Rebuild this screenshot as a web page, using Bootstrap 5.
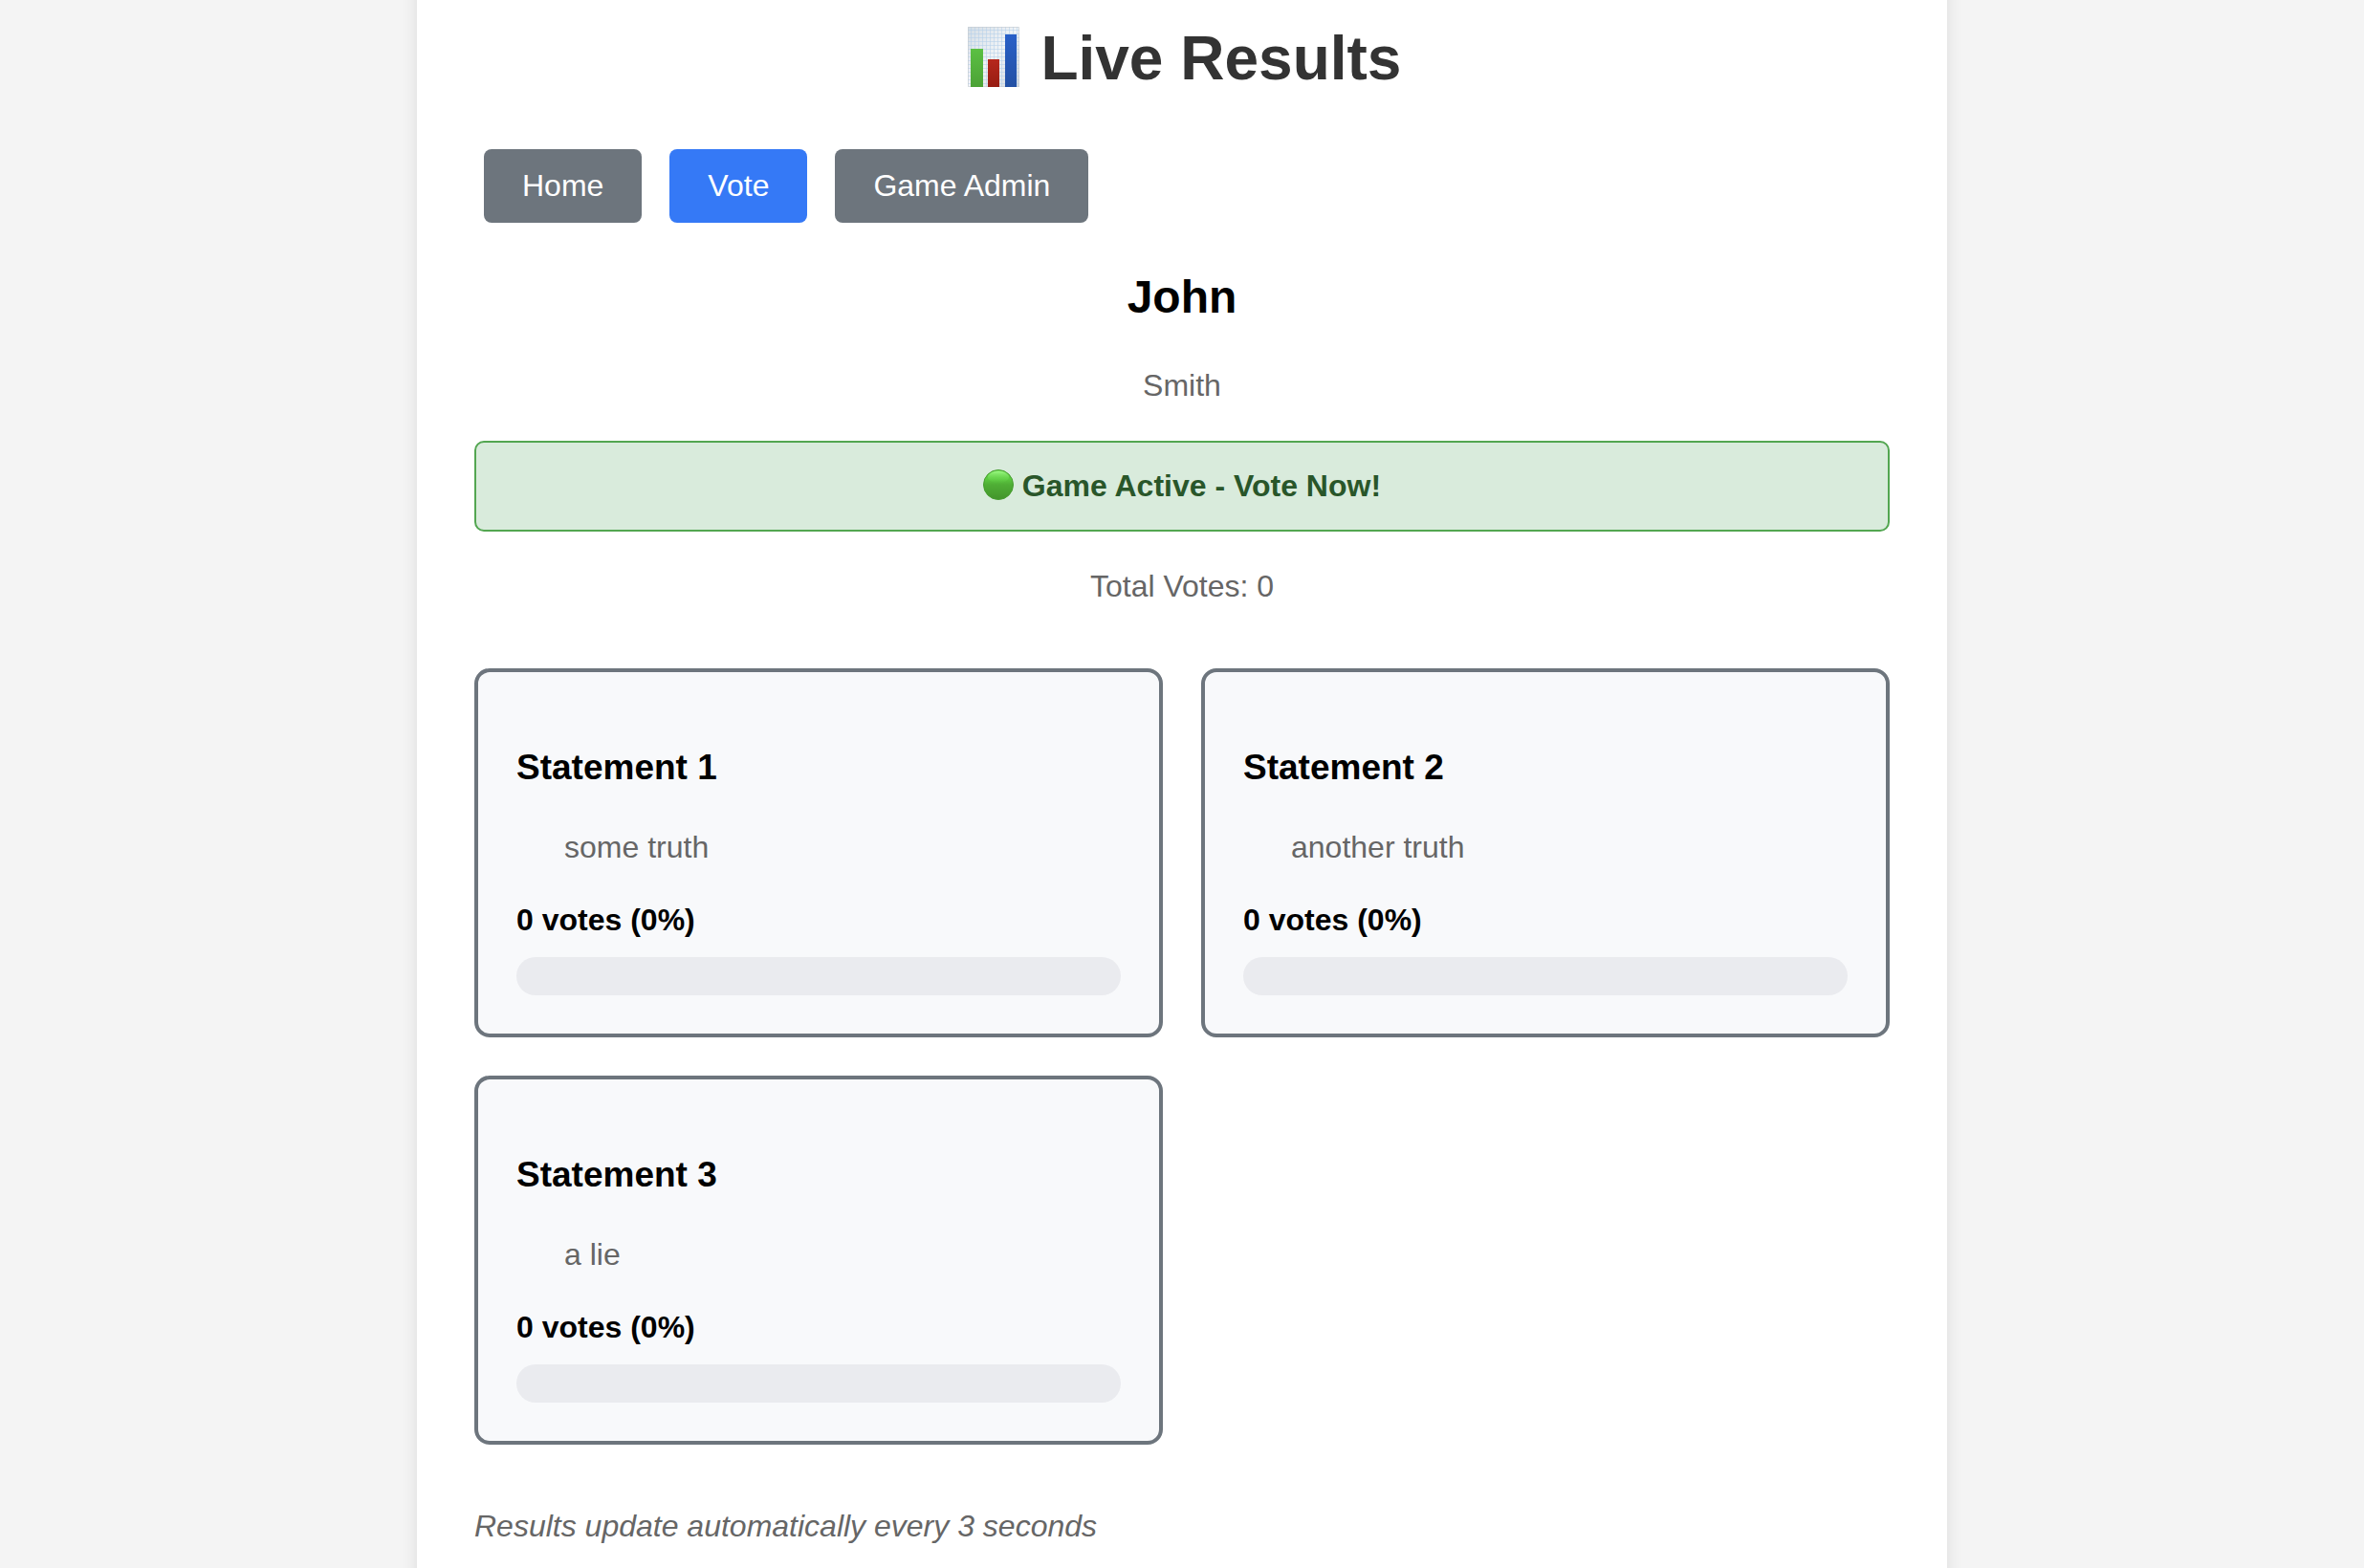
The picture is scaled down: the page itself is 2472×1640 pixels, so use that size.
<!DOCTYPE html>
<html lang="en">
<head>
<meta charset="utf-8">
<meta name="viewport" content="width=device-width, initial-scale=1">
<title>Live Results</title>
<link rel="stylesheet" href="https://cdn.jsdelivr.net/npm/bootstrap@5.3.0/dist/css/bootstrap.min.css">
<style>
  body { background: #f4f4f4; color: #000; font: 32px/37px "Liberation Sans", Arial, sans-serif; }
  /* The panel runs past both window edges so its shadow never fades at the ends */
  .panel { max-width: 1600px; min-height: calc(100vh + 80px); margin-block: -40px; padding: 64px 60px; background: #fff; box-shadow: 0 4px 16px rgba(0, 0, 0, .1); }
  .page-title { font-size: 64px; line-height: 74px; color: #333; margin-bottom: 58px; }
  .chart-icon { width: 64px; height: 64px; vertical-align: -8px; }
  .dot-icon { width: 32px; height: 32px; vertical-align: -4px; }
  .page-nav { gap: 29px; padding-inline: 10px; margin-bottom: 50px; }
  .page-nav .btn { font-size: 32px; line-height: 37px; padding: 20px 40px; border: 0; border-radius: 8px; }
  .btn-secondary { --bs-btn-bg: #6d757d; }
  .btn-primary { --bs-btn-bg: #3579f6; }
  .player-name { font-size: 48px; line-height: 55px; margin-bottom: 47px; }
  .soft-text { color: #666; }
  .player-info { margin-bottom: 39px; }
  .game-status { padding: 27px; margin-bottom: 39px; border: 2px solid #53a651; border-radius: 10px; background: #d9ebdc; color: #29562a; }
  .total-votes { margin-bottom: 67px; }
  .results-row { --bs-gutter-x: 40px; --bs-gutter-y: 40px; }
  .result-card { padding: 78px 40px 40px; border: 4px solid #6d757d; border-radius: 16px; background: #f8f9fb; color: #000; }
  .result-card h3 { font-size: 37px; line-height: 43px; margin-bottom: 44px; }
  .statement-text { padding-inline: 50px; margin-bottom: 39px; }
  .vote-count { margin-bottom: 20px; }
  .result-card .progress { height: 40px; border-radius: 20px; background: #eaebef; }
  .update-note { margin-top: 67px; }
</style>
</head>
<body class="overflow-x-hidden">
<main class="panel mx-auto">
  <h1 class="page-title text-center fw-bold"><svg class="chart-icon" viewBox="0 0 64 64" aria-hidden="true">
      <defs>
        <linearGradient id="paper" x1="0" y1="0" x2="1" y2="1"><stop offset="0" stop-color="#d4dde5"/><stop offset=".5" stop-color="#f1f4f7"/><stop offset="1" stop-color="#d5d8dd"/></linearGradient>
        <linearGradient id="barGreen" x1="0" y1="0" x2="0" y2="1"><stop offset="0" stop-color="#5bc043"/><stop offset="1" stop-color="#4ca236"/></linearGradient>
        <linearGradient id="barRed" x1="0" y1="0" x2="0" y2="1"><stop offset="0" stop-color="#b6271c"/><stop offset="1" stop-color="#971d13"/></linearGradient>
        <linearGradient id="barBlue" x1="0" y1="0" x2="0" y2="1"><stop offset="0" stop-color="#2960c8"/><stop offset="1" stop-color="#2350a4"/></linearGradient>
        <pattern id="grid" width="4" height="4" patternUnits="userSpaceOnUse"><path d="M0 .5H4M.5 0V4" stroke="#b4d0e8" stroke-opacity=".55" fill="none"/></pattern>
      </defs>
      <path fill="url(#paper)" d="M5 1h54v63H5z"/>
      <path fill="url(#grid)" d="M5 1h54v63H5z"/>
      <path fill="none" stroke="#c3cad1" stroke-opacity=".6" d="M5.500 1.500h53v62h-53z"/>
      <path fill="url(#barGreen)" d="M8 24h13v40H8z"/>
      <path fill="url(#barRed)" d="M26 35h12v29H26z"/>
      <path fill="url(#barBlue)" d="M44 9h12v55H44z"/>
    </svg> Live Results</h1>

  <nav class="page-nav d-flex flex-wrap" aria-label="Pages">
    <a class="btn btn-secondary" href="#home">Home</a>
    <a class="btn btn-primary" href="#vote">Vote</a>
    <a class="btn btn-secondary" href="#admin">Game Admin</a>
  </nav>

  <section class="text-center">
    <h2 class="player-name fw-bold">John</h2>
    <p class="player-info soft-text">Smith</p>
    <div class="game-status fw-bold" role="status"><svg class="dot-icon" viewBox="0 0 32 32" aria-hidden="true">
        <defs>
          <linearGradient id="dotFill" x1="0" y1="0" x2="0" y2="1"><stop offset="0" stop-color="#5fce43"/><stop offset=".3" stop-color="#5cc940"/><stop offset=".5" stop-color="#4fae35"/><stop offset="1" stop-color="#43942b"/></linearGradient>
          <linearGradient id="dotShine" x1="0" y1="0" x2="0" y2="1"><stop offset="0" stop-color="#9cf984"/><stop offset="1" stop-color="#60d344" stop-opacity="0"/></linearGradient>
        </defs>
        <circle cx="16" cy="16" r="15.500" fill="url(#dotFill)" stroke="#479d30"/>
        <ellipse cx="16" cy="8" rx="11" ry="6.500" fill="url(#dotShine)"/>
      </svg> Game Active - Vote Now!</div>
    <p class="total-votes soft-text">Total Votes: 0</p>
  </section>

  <section class="results-row row row-cols-1 row-cols-lg-2">
    <div class="col">
      <article class="result-card card">
        <h3 class="fw-bold mt-0">Statement 1</h3>
        <p class="statement-text soft-text">some truth</p>
        <div class="vote-count fw-bold">0 votes (0%)</div>
        <div class="progress" role="progressbar" aria-label="Votes for statement 1" aria-valuenow="0" aria-valuemin="0" aria-valuemax="100"><div class="progress-bar" style="width: 0%"></div></div>
      </article>
    </div>
    <div class="col">
      <article class="result-card card">
        <h3 class="fw-bold mt-0">Statement 2</h3>
        <p class="statement-text soft-text">another truth</p>
        <div class="vote-count fw-bold">0 votes (0%)</div>
        <div class="progress" role="progressbar" aria-label="Votes for statement 2" aria-valuenow="0" aria-valuemin="0" aria-valuemax="100"><div class="progress-bar" style="width: 0%"></div></div>
      </article>
    </div>
    <div class="col">
      <article class="result-card card">
        <h3 class="fw-bold mt-0">Statement 3</h3>
        <p class="statement-text soft-text">a lie</p>
        <div class="vote-count fw-bold">0 votes (0%)</div>
        <div class="progress" role="progressbar" aria-label="Votes for statement 3" aria-valuenow="0" aria-valuemin="0" aria-valuemax="100"><div class="progress-bar" style="width: 0%"></div></div>
      </article>
    </div>
  </section>

  <p class="update-note soft-text fst-italic mb-0">Results update automatically every 3 seconds</p>
</main>
<script src="https://cdn.jsdelivr.net/npm/bootstrap@5.3.0/dist/js/bootstrap.bundle.min.js"></script>
</body>
</html>
